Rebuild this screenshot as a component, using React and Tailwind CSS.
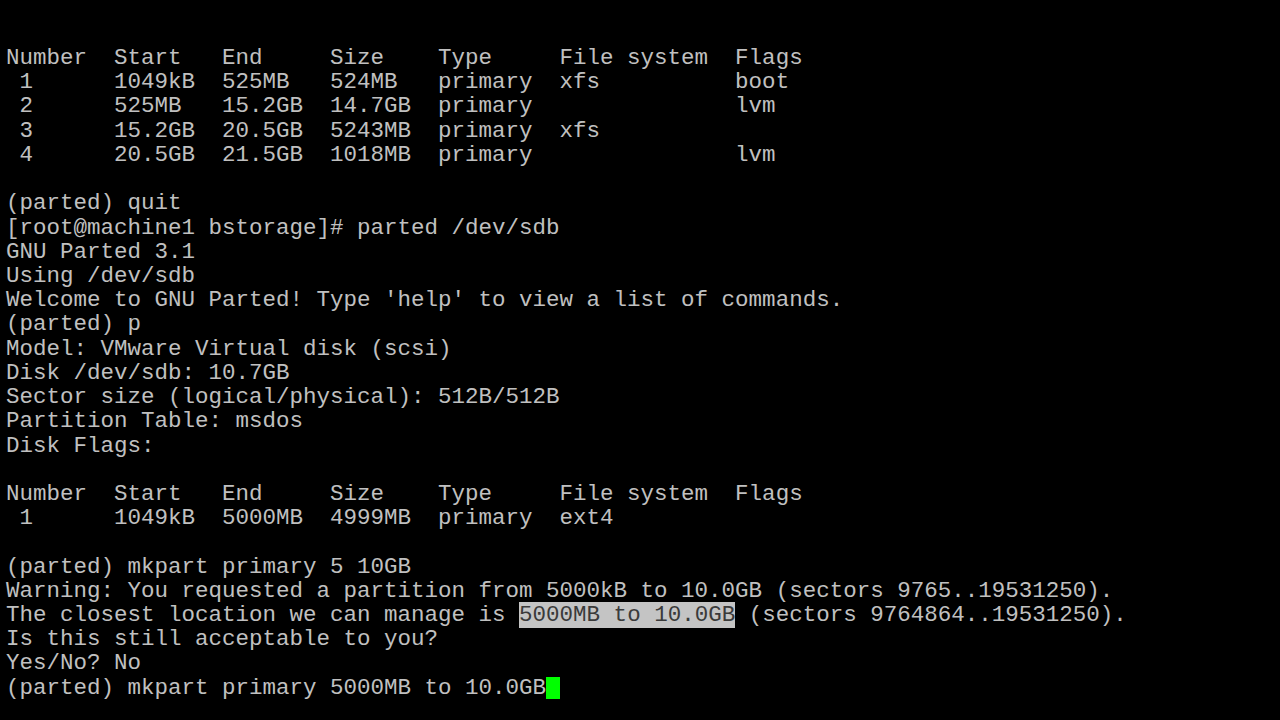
import React from 'react';

const HEADER = 'Number  Start   End     Size    Type     File system  Flags';

const lines = [
  HEADER,
  ' 1      1049kB  525MB   524MB   primary  xfs          boot',
  ' 2      525MB   15.2GB  14.7GB  primary               lvm',
  ' 3      15.2GB  20.5GB  5243MB  primary  xfs',
  ' 4      20.5GB  21.5GB  1018MB  primary               lvm',
  '',
  '(parted) quit',
  '[root@machine1 bstorage]# parted /dev/sdb',
  'GNU Parted 3.1',
  'Using /dev/sdb',
  "Welcome to GNU Parted! Type 'help' to view a list of commands.",
  '(parted) p',
  'Model: VMware Virtual disk (scsi)',
  'Disk /dev/sdb: 10.7GB',
  'Sector size (logical/physical): 512B/512B',
  'Partition Table: msdos',
  'Disk Flags:',
  '',
  HEADER,
  ' 1      1049kB  5000MB  4999MB  primary  ext4',
  '',
  '(parted) mkpart primary 5 10GB',
  'Warning: You requested a partition from 5000kB to 10.0GB (sectors 9765..19531250).',
];

function Line({ children }) {
  return <div className="h-[24.23px] whitespace-pre">{children || ' '}</div>;
}

export default function App() {
  return (
    <div
      className="w-[1280px] h-[720px] overflow-hidden bg-black text-[#c0c0c0] text-[22.5px] leading-[24.23px] pl-[6px] pt-[46px]"
      style={{ fontFamily: '"Liberation Mono", "Courier New", monospace' }}
    >
      {lines.map((l, i) => (
        <Line key={i}>{l}</Line>
      ))}
      <Line>
        The closest location we can manage is{' '}
        <span className="bg-[#c4c4c4] text-[#3a3a3a]">5000MB to 10.0GB</span>
        {' (sectors 9764864..19531250).'}
      </Line>
      <Line>Is this still acceptable to you?</Line>
      <Line>Yes/No? No</Line>
      <div className="h-[24.23px] whitespace-pre flex items-center">
        <span>(parted) mkpart primary 5000MB to 10.0GB</span>
        <span className="inline-block w-[14px] h-[22px] bg-[#00ff00]" />
      </div>
    </div>
  );
}
